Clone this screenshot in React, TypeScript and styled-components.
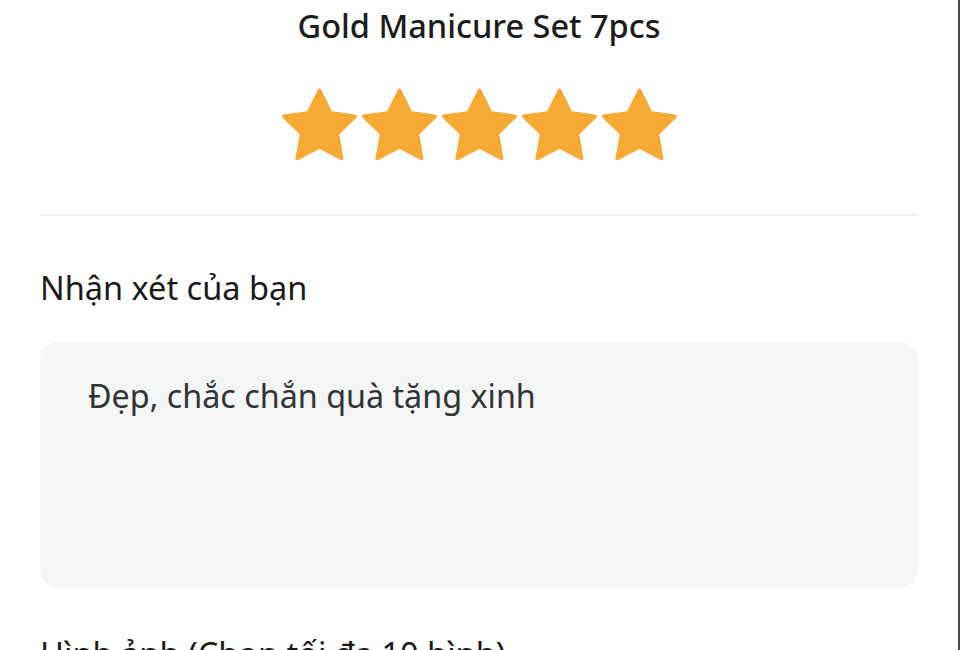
import React from 'react'
import styled, {createGlobalStyle} from 'styled-components'

const GlobalStyle = createGlobalStyle`
    html, body {
        margin: 0;
        padding: 0;
        background: #ffffff;
    }
    body {
        font-family: "Noto Sans", "Open Sans", sans-serif;
    }
`

const Screen = styled.div`
    width: 878px;
    height: 650px;
    overflow: hidden;
    border-right: 2px solid #4a4a4a;
    background: #ffffff;
    padding: 0 40px;
`

const Title = styled.h1`
    margin: 6px 0 0;
    font-size: 32.5px;
    line-height: 40px;
    font-weight: 500;
    color: #1c1c1c;
    text-align: center;
`

const Stars = styled.div`
    display: flex;
    justify-content: center;
    gap: 5px;
    margin-top: 42px;
`

const Divider = styled.hr`
    border: none;
    height: 2px;
    background: #f2f2f2;
    margin: 53px 0 0;
`

const SectionLabel = styled.h2<{$gap: number}>`
    margin: ${p => p.$gap}px 0 0;
    font-size: 32.5px;
    line-height: 40px;
    font-weight: 400;
    color: #1a1a1a;
    white-space: nowrap;
`

const CommentBox = styled.div`
    margin-top: 34px;
    height: 245px;
    background: #f4f5f5;
    border-radius: 18px;
    padding: 32px 48px;
    box-sizing: border-box;
    font-size: 32.3px;
    line-height: 42px;
    color: #333333;
`

const Star: React.FC = () => (
    <svg width="75" height="73" viewBox="1.3 1.1 21.4 20.4" preserveAspectRatio="none">
        <path
            d="M12 1.8l3.15 6.3 6.95.95-5.05 4.8 1.25 6.9L12 17.5l-6.3 3.25 1.25-6.9-5.05-4.8 6.95-.95z"
            fill="#f5ab33"
            stroke="#f5ab33"
            strokeWidth="1.1"
            strokeLinejoin="round"
        />
    </svg>
)

const App: React.FC = () => {
    const productName = "Gold Manicure Set 7pcs"
    const rating = 5
    const comment = "Đẹp, chắc chắn quà tặng xinh"

    return (
        <>
            <GlobalStyle/>
            <Screen>
                <Title>{productName}</Title>
                <Stars>
                    {Array.from({length: rating}).map((_, i) => <Star key={i}/>)}
                </Stars>
                <Divider/>
                <SectionLabel $gap={52}>Nhận xét của bạn</SectionLabel>
                <CommentBox>{comment}</CommentBox>
                <SectionLabel $gap={47}>Hình ảnh (Chọn tối đa 10 hình)</SectionLabel>
            </Screen>
        </>
    )
}

export default App
